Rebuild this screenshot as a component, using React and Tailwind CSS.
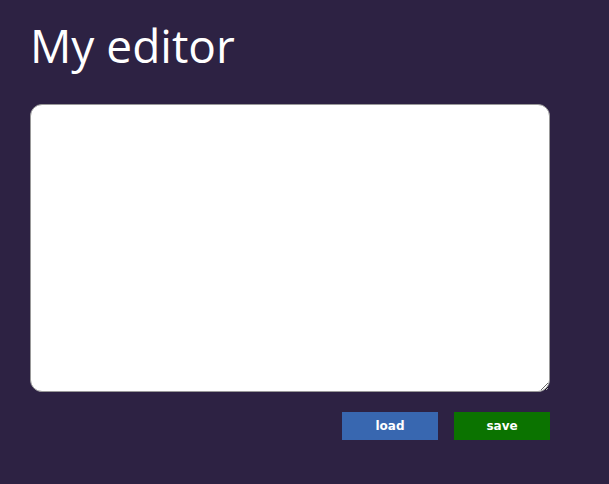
export default function App() {
    return (
        <div className="min-h-[484px] w-full bg-[#2d2243] px-[30px] pt-[16px]" style={{ fontFamily: '"Open Sans", sans-serif' }}>
            <h1 className="text-[46px] leading-[58px] text-white font-medium">My editor</h1>

            <textarea className="mt-[30px] block w-[520px] h-[288px] bg-white rounded-[12px] border border-[#999] outline-none p-2 resize" />

            <div className="flex justify-end gap-[16px] w-[520px] mt-[20px]">
                <button
                    className="w-[96px] h-[28px] bg-[#3867b0] text-white text-[12px] font-bold"
                    style={{ fontFamily: '"DejaVu Sans", sans-serif' }}
                >
                    load
                </button>
                <button
                    className="w-[96px] h-[28px] bg-[#0b7300] text-white text-[12px] font-bold"
                    style={{ fontFamily: '"DejaVu Sans", sans-serif' }}
                >
                    save
                </button>
            </div>
        </div>
    );
}
